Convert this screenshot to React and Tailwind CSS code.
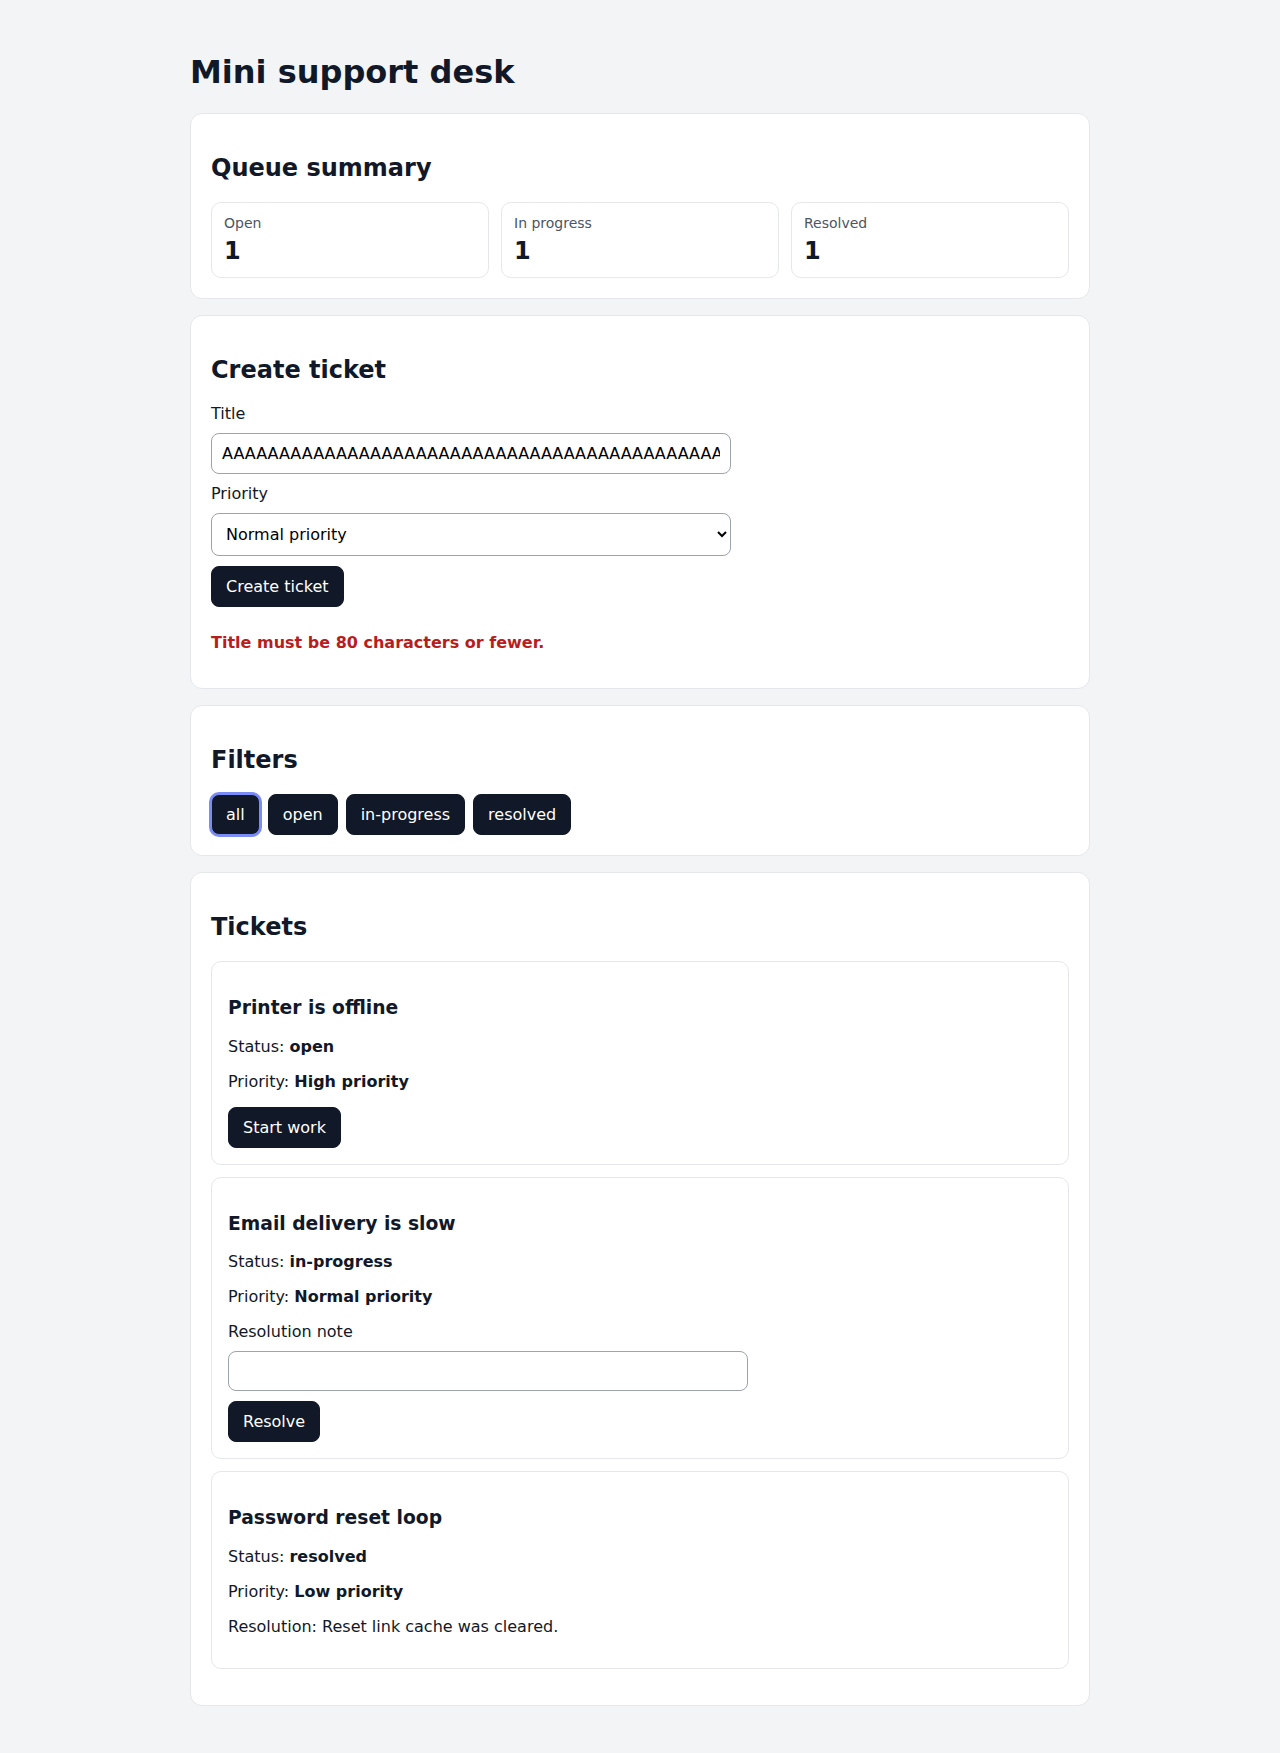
import React from "react";

const btn =
  "inline-block self-start bg-[#111827] text-white border border-[#111827] rounded-[8px] px-[14px] py-[10px] text-[16px] leading-[normal] cursor-pointer";

function Card({ children }) {
  return (
    <section className="bg-white border border-[#e5e7eb] rounded-[12px] p-5">
      {children}
    </section>
  );
}

function H2({ children }) {
  return (
    <h2 className="text-[24px] font-bold leading-[normal] mt-[20px] mb-[20px] text-[#111827]">
      {children}
    </h2>
  );
}

function Stat({ label, value }) {
  return (
    <div className="border border-[#e5e7eb] rounded-[10px] p-3">
      <div className="text-[14px] text-[#4b5563] leading-[normal]">{label}</div>
      <div className="text-[24px] font-bold leading-[normal] mt-[6px] text-[#111827]">{value}</div>
    </div>
  );
}

function Ticket({ title, status, priority, children }) {
  return (
    <li className="border border-[#e5e7eb] rounded-[10px] p-4">
      <h3 className="text-[18.72px] font-bold leading-[normal] mt-[18.72px] mb-[18.72px] text-[#111827]">
        {title}
      </h3>
      <p className="my-4">
        Status: <strong className="font-bold">{status}</strong>
      </p>
      <p className="my-4">
        Priority: <strong className="font-bold">{priority}</strong>
      </p>
      {children}
    </li>
  );
}

export default function App() {
  const longTitle = "A".repeat(90);
  return (
    <div className="min-h-screen bg-[#f3f4f6] font-['DejaVu_Sans',sans-serif] text-[16px] leading-[normal] text-[#111827]">
      <div className="max-w-[900px] mx-auto pt-8 pb-8">
        <h1 className="text-[32px] font-bold leading-[normal] mt-[21.44px] mb-[22px]">
          Mini support desk
        </h1>

        <div className="flex flex-col gap-4">
          <Card>
            <H2>Queue summary</H2>
            <div className="grid grid-cols-3 gap-3">
              <Stat label="Open" value="1" />
              <Stat label="In progress" value="1" />
              <Stat label="Resolved" value="1" />
            </div>
          </Card>

          <Card>
            <H2>Create ticket</H2>
            <div className="flex flex-col gap-[10px]">
              <label htmlFor="title">Title</label>
              <input
                id="title"
                type="text"
                defaultValue={longTitle}
                className="w-[520px] h-[41px] border border-[#9ca3af] rounded-[8px] px-[10px] bg-white text-black outline-none"
              />
              <label htmlFor="priority">Priority</label>
              <select
                id="priority"
                defaultValue="normal"
                className="w-[520px] h-[43px] border border-[#9ca3af] rounded-[8px] px-[10px] bg-white text-black"
              >
                <option value="low">Low priority</option>
                <option value="normal">Normal priority</option>
                <option value="high">High priority</option>
              </select>
              <button className={btn}>Create ticket</button>
              <p className="my-4 font-bold text-[#b91c1c]">
                Title must be 80 characters or fewer.
              </p>
            </div>
          </Card>

          <Card>
            <H2>Filters</H2>
            <div className="flex gap-2">
              <button className="bg-[#111827] text-white border border-[#7c8cf6] ring-2 ring-[#7c8cf6] rounded-[8px] px-[14px] py-[10px] leading-[normal]">
                all
              </button>
              <button className={btn}>open</button>
              <button className={btn}>in-progress</button>
              <button className={btn}>resolved</button>
            </div>
          </Card>

          <Card>
            <H2>Tickets</H2>
            <ul className="flex flex-col gap-3 mb-4 list-none p-0">
              <Ticket title="Printer is offline" status="open" priority="High priority">
                <button className={btn}>Start work</button>
              </Ticket>
              <Ticket
                title="Email delivery is slow"
                status="in-progress"
                priority="Normal priority"
              >
                <div className="flex flex-col gap-[10px] mt-4">
                  <label htmlFor="note">Resolution note</label>
                  <input
                    id="note"
                    type="text"
                    className="w-[520px] h-[40px] border border-[#9ca3af] rounded-[8px] px-[10px] bg-white outline-none"
                  />
                  <button className={btn}>Resolve</button>
                </div>
              </Ticket>
              <Ticket title="Password reset loop" status="resolved" priority="Low priority">
                <p className="my-4">Resolution: Reset link cache was cleared.</p>
              </Ticket>
            </ul>
          </Card>
        </div>
      </div>
    </div>
  );
}
